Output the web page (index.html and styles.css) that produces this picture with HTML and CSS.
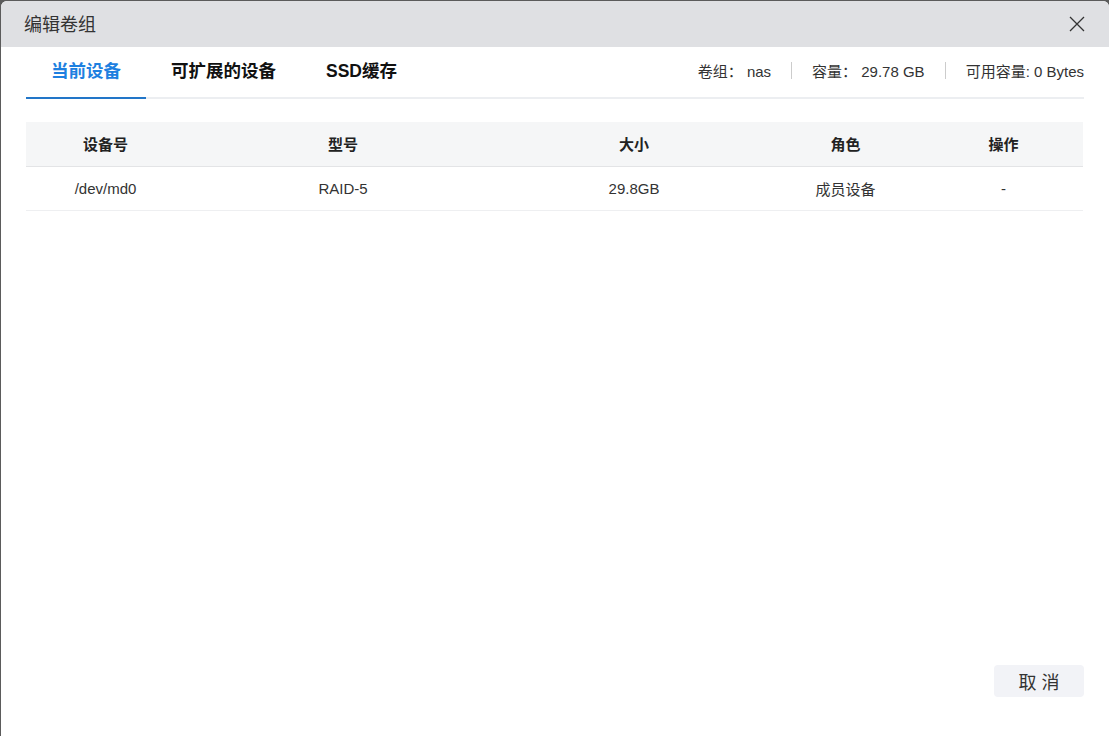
FILE: index.html
```html
<!DOCTYPE html>
<html lang="zh">
<head>
  <meta charset="UTF-8" />
  <title>编辑卷组</title>
  <link rel="stylesheet" href="styles.css">
</head>
<body>
  <div id="dialog">
    <div class="dialog-header">
      <span class="dialog-title">编辑卷组</span>
      <span class="close-btn">
        <svg width="18" height="18" viewBox="0 0 18 18"><path d="M2 2L16 16M16 2L2 16" stroke="#333" stroke-width="1.3" fill="none"/></svg>
      </span>
    </div>

    <div class="dialog-body">
      <div class="tab-bar">
        <div class="tabs">
          <div class="tab active">当前设备</div>
          <div class="tab">可扩展的设备</div>
          <div class="tab">SSD缓存</div>
        </div>
        <div class="vol-info">
          <span>卷组：&nbsp;nas</span>
          <span class="sep"></span>
          <span>容量：&nbsp;29.78 GB</span>
          <span class="sep"></span>
          <span>可用容量: 0 Bytes</span>
        </div>
      </div>

      <!-- 设备列表 -->
      <table class="dev-table">
        <colgroup>
          <col class="c-dev">
          <col class="c-model">
          <col class="c-size">
          <col class="c-role">
          <col class="c-op">
        </colgroup>
        <thead>
          <tr>
            <th>设备号</th>
            <th>型号</th>
            <th>大小</th>
            <th>角色</th>
            <th>操作</th>
          </tr>
        </thead>
        <tbody>
          <tr>
            <td>/dev/md0</td>
            <td>RAID-5</td>
            <td>29.8GB</td>
            <td>成员设备</td>
            <td>-</td>
          </tr>
        </tbody>
      </table>

      <div class="dialog-footer">
        <button class="btn-cancel">取 消</button>
      </div>
    </div>
  </div>
</body>
</html>
```

FILE: styles.css
```css
html, body {
  margin: 0;
  height: 100%;
}

body {
  background: #5b5b5b;
  font-family: "Liberation Sans", Arial, "Noto Sans CJK SC", sans-serif;
  color: #333;
  overflow: hidden;
}

/* 对话框 */
#dialog {
  margin: 1px 0 0 1px;
  height: calc(100% - 1px);
  background: #fff;
  border-radius: 6px 6px 0 0;
  overflow: hidden;
  display: flex;
  flex-direction: column;
}

.dialog-header {
  height: 46px;
  flex-shrink: 0;
  background: #dfe0e3;
  display: flex;
  align-items: center;
  justify-content: space-between;
  padding: 0 23px 0 23px;
  box-sizing: border-box;
}

.dialog-title {
  font-size: 18px;
  color: #333;
  margin-top: -3px;
}

.close-btn {
  display: flex;
  align-items: center;
  cursor: pointer;
}

.dialog-body {
  flex: 1;
  display: flex;
  flex-direction: column;
  padding: 0 25px 39px 25px;
}

/* 标签栏 */
.tab-bar {
  display: flex;
  justify-content: space-between;
  align-items: stretch;
  border-bottom: 2px solid #eceef1;
  height: 50px;
}

.tabs {
  display: flex;
}

.tab {
  font-size: 17.5px;
  font-weight: bold;
  color: #111;
  padding: 10px 25px 0;
  margin-bottom: -2px;
  border-bottom: 2px solid transparent;
  white-space: nowrap;
}

.tab.active {
  color: #1e80e0;
  border-bottom: 2px solid #2276c8;
}

.vol-info {
  display: flex;
  align-items: center;
  font-size: 15px;
  color: #333;
  padding-bottom: 4px;
  gap: 20px;
}

.vol-info .sep {
  width: 1px;
  height: 17px;
  background: #ccc;
}

/* 表格 */
.dev-table {
  margin-top: 23px;
  width: 1057px;
  border-collapse: collapse;
  table-layout: fixed;
  font-size: 15px;
}

.c-dev { width: 159px; }
.c-model { width: 316px; }
.c-size { width: 266px; }
.c-role { width: 157px; }
.c-op { width: 159px; }

.dev-table th {
  background: #f5f6f7;
  height: 43px;
  font-weight: bold;
  color: #222;
  text-align: center;
  padding: 0 0 1px;
  border-bottom: 1px solid #e3e4e6;
}

.dev-table td {
  height: 42px;
  text-align: center;
  padding: 0 0 1px;
  color: #333;
  border-bottom: 1px solid #eeeff1;
}

/* 底部按钮 */
.dialog-footer {
  margin-top: auto;
  display: flex;
  justify-content: flex-end;
}

.btn-cancel {
  width: 90px;
  height: 32px;
  border: none;
  border-radius: 4px;
  background: #f2f3f7;
  color: #333;
  font-size: 18px;
  font-family: "Liberation Sans", Arial, "Noto Sans CJK SC", sans-serif;
  cursor: pointer;
}
```
